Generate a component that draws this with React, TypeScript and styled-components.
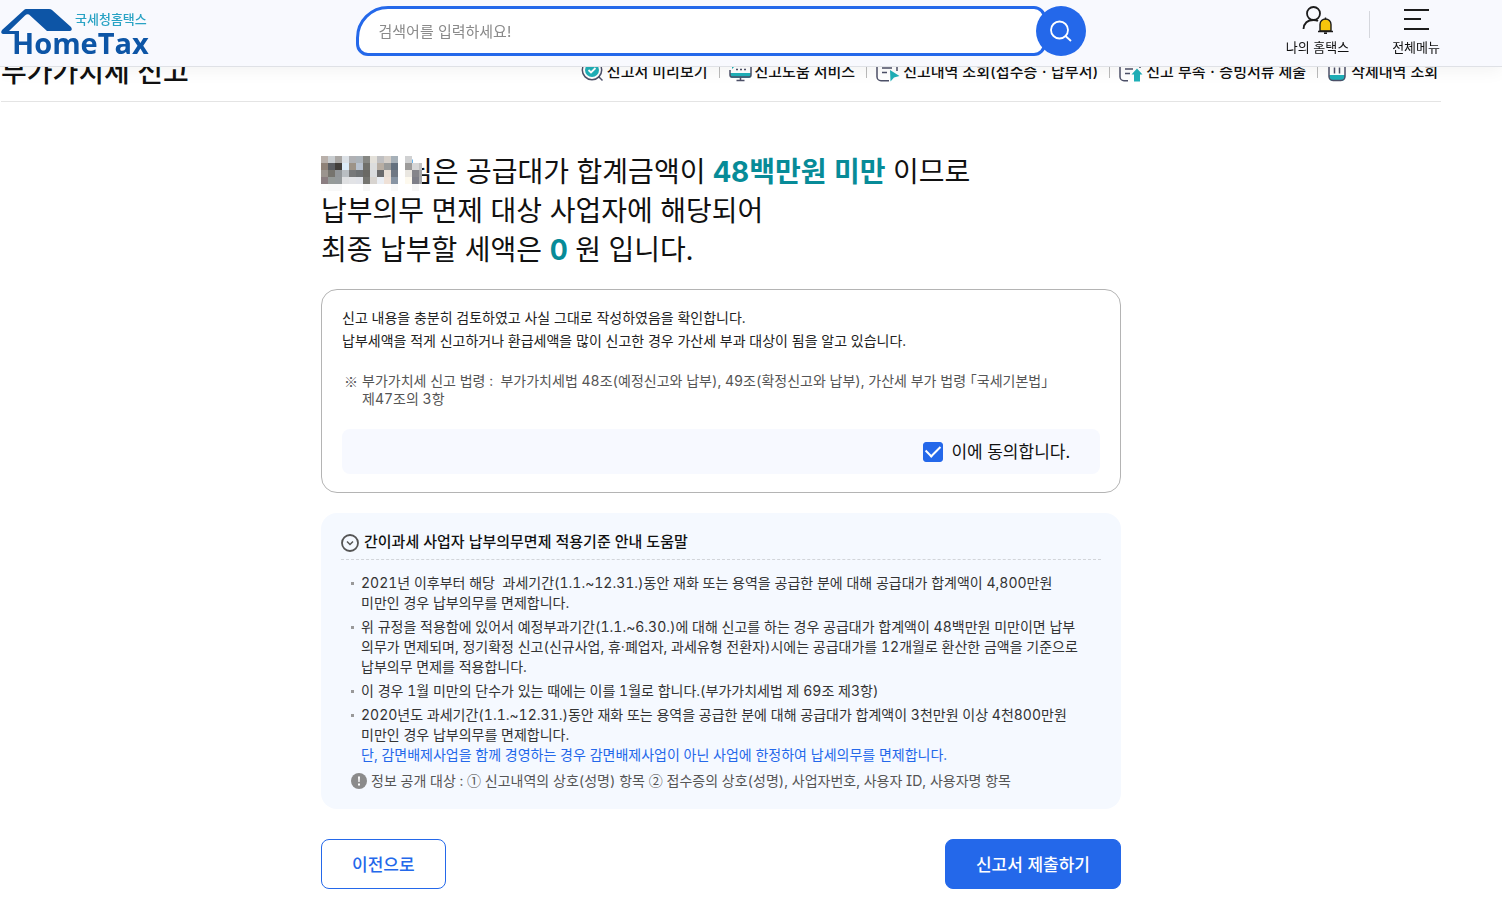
import React from "react";
import styled, { createGlobalStyle } from "styled-components";

const Global = createGlobalStyle`
  * { box-sizing: border-box; }
  body {
    margin: 0; background: #fff; color: #111; font-family: Inter, "Noto Sans CJK KR", sans-serif; font-size: 14px;
    word-break: keep-all; font-variant-numeric: tabular-nums; font-feature-settings: "cv08", "calt" 0;
  }
  h1, h2, p, ul { margin: 0; padding: 0; }
  button, input { font-family: inherit; }
  a { color: inherit; text-decoration: none; }
`;

const Header = styled.header`
  position: fixed; top: 0; left: 0; right: 0; z-index: 10;
  height: 67px; background: #f8f9fe; border-bottom: 1px solid #dfe1e6;
  box-shadow: 0 4px 16px rgba(0, 0, 0, 0.05);
`;
const HeaderInner = styled.div`
  max-width: 1441px; height: 66px; display: grid; align-items: start;
  grid-template-columns: 1fr 730px 1fr;
`;
const Logo = styled.a`
  display: block; width: 152px; height: 56px; margin-top: 6px;
`;
const Search = styled.form`
  display: flex; align-items: center; margin-top: 6px;
`;
const SearchInput = styled.input`
  flex: 1; min-width: 0; height: 50px; border: 3px solid #2468ea; background: #fff;
  border-radius: 32px 12px 12px 12px; padding: 0 20px; font-size: 15px; color: #222; outline: 0;
  margin-right: -10px;
  &::placeholder { color: #8a8a8a; opacity: 1; }
`;
const SearchButton = styled.button`
  position: relative; width: 50px; height: 50px; border: 0; border-radius: 50%; background: #2468ea;
  padding: 0; display: grid; place-items: center;
`;
const Quick = styled.nav`
  display: flex; justify-content: flex-end; padding: 5px 1px 0 0;
`;
const QuickLink = styled.a`
  display: flex; flex-direction: column; align-items: center; gap: 4px;
  font-size: 13px; line-height: 19px; color: #111;
`;
const QuickBar = styled.span`
  width: 1px; height: 27px; margin: 6px 22px 0 20px; background: #d5d7dd;
`;

const Page = styled.div`max-width: 1441px; padding-left: 1px;`;
const TitleBar = styled.div`
  display: flex; justify-content: space-between; align-items: flex-end; height: 102px;
  padding-bottom: 13px; border-bottom: 1px solid #e4e4e4;
`;
const PageTitle = styled.h1`font-size: 28px; line-height: 32px; font-weight: 500;`;
const Tools = styled.nav`display: flex; align-items: center; padding: 0 3px 6px 0;`;
const Tool = styled.a`
  display: flex; align-items: center; gap: 3px; height: 24px; font-size: 15px; font-weight: 500; white-space: nowrap;
  & + & { margin-left: 11px; }
  & + &::before { content: ""; width: 1px; height: 15px; background: #bbb; margin-right: 6px; }
`;

const Main = styled.main`max-width: 800px; margin: 51px auto 0; padding-bottom: 36px;`;
const Lead = styled.h2`font-size: 28px; line-height: 39px; font-weight: 400; color: #111;`;
const Strong = styled.strong`font-weight: 700; color: #078b98;`;
const Masked = styled.span`
  position: relative; display: inline-block; width: 86px; height: 26px;
`;
const Mosaic = styled.svg`position: absolute; left: 0; top: 0;`;

const Consent = styled.section`
  margin-top: 19px; border: 1px solid #b4b4b4; border-radius: 16px; padding: 16px 20px 18px; color: #222;
`;
const Statement = styled.p`line-height: 23px;`;
const Symbol = styled.span`font-family: "Noto Sans CJK KR", sans-serif;`;
const Law = styled.p`
  margin-top: 20px; display: flex; gap: 4px; padding: 0 40px 0 2px; line-height: 18px; color: #555; white-space: pre-wrap;
`;
const Agree = styled.div`
  display: flex; justify-content: flex-end; align-items: center; gap: 8px; height: 45px; margin-top: 21px;
  padding-right: 30px; border-radius: 8px; background: #f7f9ff; font-size: 17px; color: #111;
`;
const AgreeLabel = styled.label`padding-bottom: 2px;`;
const Check = styled.input`
  appearance: none; width: 20px; height: 20px; margin: 0; border-radius: 3px; border: 1px solid #2468ea; background: #fff;
  display: grid; place-items: center;
  &:checked { background: #2468ea; }
  &:checked::before {
    content: ""; width: 12px; height: 7px; border: solid #fff; border-width: 0 0 2px 2px;
    transform: translateY(-2px) rotate(-45deg);
  }
`;

const Help = styled.section`
  margin-top: 20px; padding: 16px 20px 18px; border-radius: 16px; background: #f5f9ff; color: #333;
`;
const HelpTitle = styled.h2`
  display: flex; align-items: center; gap: 5px; height: 31px; padding-bottom: 8px; font-size: 15px; font-weight: 500; color: #111;
  border-bottom: 1px dashed #d2d5da;
  svg { margin-top: 5px; }
`;
const List = styled.ul`
  list-style: none; margin-top: 13px; padding-left: 10px; display: flex; flex-direction: column; gap: 4px;
`;
const Item = styled.li`
  display: flex; gap: 7px; line-height: 20px; white-space: pre-wrap;
  &::before { content: ""; flex: none; width: 3px; height: 3px; margin-top: 9px; background: #999; }
`;
const Accent = styled.span`color: #2468ea;`;
const Notice = styled.p`
  display: flex; align-items: center; gap: 4px; margin-top: 5px; padding-left: 10px; line-height: 20px; color: #555;
`;

const Actions = styled.div`display: flex; justify-content: space-between; margin-top: 30px;`;
const ActionButton = styled.button<{ $primary?: boolean }>`
  height: 50px; padding: 0 30px 2px; border-radius: 8px; font-size: 17px; font-weight: 500;
  border: 1px solid #2468ea;
  background: ${(p) => (p.$primary ? "#2468ea" : "#fff")};
  color: ${(p) => (p.$primary ? "#fff" : "#2468ea")};
`;

const teal = "#1fb0b8";
const ink = "#4d5068";

const PreviewIcon = () => (
  <svg width="23" height="24" viewBox="0 0 23 24" fill="none">
    <circle cx="11" cy="12" r="9.7" stroke={ink} strokeWidth="1.5" />
    <path d="M17.500 18.500l4 4" stroke={ink} strokeWidth="1.5" />
    <circle cx="11" cy="12" r="7" fill={teal} />
    <path d="M7.500 12l2.500 2.500 4.500-4.500" stroke="#fff" strokeWidth="1.8" />
  </svg>
);
const HelpIcon = () => (
  <svg width="23" height="24" viewBox="0 0 23 24" fill="none">
    <path d="M1 15h21v3a2 2 0 0 1-2 2H3a2 2 0 0 1-2-2z" fill={teal} />
    <path d="M12 4h8a2 2 0 0 1 2 2v11a2 2 0 0 1-2 2H3a2 2 0 0 1-2-2v-5M11.500 19v3.500M7.500 22.500h8" stroke={ink} strokeWidth="1.500" />
    <path d="M2 1h8v7H6l-3 3V8H2z" fill={teal} />
    <path d="M7 11.500h2M11 11.500h2M15 11.500h2" stroke={ink} strokeWidth="1.500" />
  </svg>
);
const HistoryIcon = () => (
  <svg width="24" height="24" viewBox="0 0 24 24" fill="none">
    <path d="M13 22.700H5a4 4 0 0 1-4-4V5a3 3 0 0 1 3-3h14a3 3 0 0 1 3 3v8M6 10h10M6 14.500h5" stroke={ink} strokeWidth="1.500" />
    <path d="M14 12l9.500 6-5.500 1.500-3.500 4z" fill={teal} />
  </svg>
);
const UploadIcon = () => (
  <svg width="24" height="24" viewBox="0 0 24 24" fill="none">
    <path d="M9 22.700H5a4 4 0 0 1-4-4V5a3 3 0 0 1 3-3h14a3 3 0 0 1 3 3v5M6 15.500h5M6 11h8" stroke={ink} strokeWidth="1.500" />
    <path d="M6 7.500h5" stroke={teal} strokeWidth="1.500" />
    <path d="M18 10.500l5.500 6H21v7h-6v-7h-2.500z" fill={teal} />
  </svg>
);
const TrashIcon = () => (
  <svg width="21" height="24" viewBox="0 0 21 24" fill="none">
    <path d="M2 17h16v2a4 4 0 0 1-4 4H6a4 4 0 0 1-4-4z" fill={teal} />
    <path d="M2 4v14.500a4 4 0 0 0 4 4h8a4 4 0 0 0 4-4V4M0 4h20M7.500 9.500v6M12.500 9.500v6" stroke={ink} strokeWidth="1.500" />
  </svg>
);

const tools = [
  { icon: <PreviewIcon />, label: "신고서 미리보기" },
  { icon: <HelpIcon />, label: "신고도움 서비스" },
  { icon: <HistoryIcon />, label: "신고내역 조회(접수증ㆍ납부서)" },
  { icon: <UploadIcon />, label: "신고 부속ㆍ증빙서류 제출" },
  { icon: <TrashIcon />, label: "삭제내역 조회" },
];

const mosaicRows = [
  ["#b9b0aa", "#c9cdd0", "#aaa7a4", "#dce1e6", "#b0b1b4", "#acb3b9", "#868783", "#e4e1da", "#bfbfc1", "#d5cfc9", "#a6b0b8", "", "#d0d1d2"],
  ["#8f8278", "#5c5e62", "#423e3a", "#dcebf7", "#9d9387", "#b8c2cf", "#70706b", "#dcdddd", "#b8aea3", "#9a9b9a", "#64717f", "", "#9c9b9a", "#d7d7d7", "#c2c2c2"],
  ["#9b948e", "#76746e", "#93979a", "#b9bec2", "#777879", "#6e7173", "#6a6964", "#dadcdf", "#6a6a6c", "#e8ded5", "#707884", "", "#eae7e1", "#85858a", "#a6a6a8"],
  ["#8a7d80", "#959a98", "#94999b", "#dfe0e2", "#e2e3e6", "#e0e2e8", "#74746f", "#d8d4d0", "#eaeef4", "#efe1d7", "#8794a3", "", "#fdf9ee", "#7d7e87", "#aaaaac"],
  ["#fbfbfb", "#f8f8f8", "#f8f8f8", "", "", "", "#f6f6f6", "", "", "", "#f8f8f8", "", "", "#f6f6f6"],
];

export default function App() {
  return (
    <>
      <Global />
      <Header>
        <HeaderInner>
          <Logo href="#" aria-label="국세청홈택스 HomeTax">
            <svg width="152" height="56" viewBox="0 6 152 56">
              <path d="M26 9h23q2 0 3 1l19 17q2 3-1 4H47L29 14.500q-2-1-4 1L9 31h10v5h-4v-2H3q-3-1-1-4L24 10q1-1 2-1z" fill="#0d55a6" />
              <text x="75" y="24" fontSize="13" fontWeight="500" fill="#28a2c4" fontFamily="Noto Sans CJK KR, sans-serif">국세청홈택스</text>
              <text x="12" y="54" fontSize="29" fontWeight="700" fill="#0d55a6" fontFamily="Open Sans, sans-serif">HomeTax</text>
            </svg>
          </Logo>
          <Search onSubmit={(e) => e.preventDefault()}>
            <SearchInput aria-label="검색어" placeholder="검색어를 입력하세요!" />
            <SearchButton aria-label="검색">
              <svg width="24" height="24" viewBox="0 0 24 24" fill="none" stroke="#fff" strokeWidth="1.800">
                <circle cx="10.500" cy="11" r="8.500" />
                <path d="M16.500 17l5.500 5" />
              </svg>
            </SearchButton>
          </Search>
          <Quick>
            <QuickLink href="#">
              <svg width="32" height="29" viewBox="0 0 32 29" fill="none" stroke="#1c1c1c" strokeWidth="1.800">
                <circle cx="11.500" cy="8.500" r="6.500" />
                <path d="M1.500 24C2 18 6 15 11.500 15c2 0 3.500.3 4.500 1" />
                <path d="M18 26v-6.500a5.500 5.500 0 0 1 11 0V26z" fill="#f6c50c" strokeWidth="1.400" />
                <path d="M16 26.500h15M23.500 12.500v2M22 28.300h3" strokeWidth="1.400" />
              </svg>
              나의 홈택스
            </QuickLink>
            <QuickBar />
            <QuickLink href="#">
              <svg width="26" height="29" viewBox="0 0 26 29" stroke="#1c1c1c" strokeWidth="2">
                <path d="M1 5h25M1 14h17M1 24h25" />
              </svg>
              전체메뉴
            </QuickLink>
          </Quick>
        </HeaderInner>
      </Header>

      <Page>
        <TitleBar>
          <PageTitle>부가가치세 신고</PageTitle>
          <Tools>
            {tools.map((t) => (
              <Tool href="#" key={t.label}>{t.icon}{t.label}</Tool>
            ))}
          </Tools>
        </TitleBar>

        <Main>
          <Lead>
            <Masked>
              <Mosaic width="102" height="35" viewBox="0 0 102 35" shapeRendering="crispEdges" aria-hidden="true">
                {mosaicRows.map((row, y) =>
                  row.map((c, x) => c && <rect key={`${x}-${y}`} x={x * 7} y={y * 7} width={x === 14 ? 3 : 7} height="7" fill={c} />)
                )}
              </Mosaic>
            </Masked>
            님은 공급대가 합계금액이 <Strong>48백만원 미만</Strong> 이므로<br />
            납부의무 면제 대상 사업자에 해당되어<br />
            최종 납부할 세액은 <Strong>0</Strong> 원 입니다.
          </Lead>

          <Consent>
            <Statement>신고 내용을 충분히 검토하였고 사실 그대로 작성하였음을 확인합니다.</Statement>
            <Statement>납부세액을 적게 신고하거나 환급세액을 많이 신고한 경우 가산세 부과 대상이 됨을 알고 있습니다.</Statement>
            <Law>
              <Symbol>※</Symbol>
              <span>부가가치세 신고 법령 :  부가가치세법 48조(예정신고와 납부), 49조(확정신고와 납부), 가산세 부가 법령 ｢국세기본법｣<br />제47조의 3항</span>
            </Law>
            <Agree>
              <Check type="checkbox" id="agree" defaultChecked />
              <AgreeLabel htmlFor="agree">이에 동의합니다.</AgreeLabel>
            </Agree>
          </Consent>

          <Help>
            <HelpTitle>
              <svg width="18" height="18" viewBox="0 0 18 18" fill="none" stroke="#555">
                <circle cx="9" cy="9" r="8" strokeWidth="1.800" />
                <path d="M6 7.500l3 3 3-3" strokeWidth="1.500" />
              </svg>
              간이과세 사업자 납부의무면제 적용기준 안내 도움말
            </HelpTitle>
            <List>
              <Item><span>2021년 이후부터 해당  과세기간(1.1.~12.31.)동안 재화 또는 용역을 공급한 분에 대해 공급대가 합계액이 4,800만원<br />미만인 경우 납부의무를 면제합니다.</span></Item>
              <Item><span>위 규정을 적용함에 있어서 예정부과기간(1.1.~6.30.)에 대해 신고를 하는 경우 공급대가 합계액이 48백만원 미만이면 납부<br />의무가 면제되며, 정기확정 신고(신규사업, 휴·폐업자, 과세유형 전환자)시에는 공급대가를 12개월로 환산한 금액을 기준으로<br />납부의무 면제를 적용합니다.</span></Item>
              <Item><span>이 경우 1월 미만의 단수가 있는 때에는 이를 1월로 합니다.(부가가치세법 제 69조 제3항)</span></Item>
              <Item><span>2020년도 과세기간(1.1.~12.31.)동안 재화 또는 용역을 공급한 분에 대해 공급대가 합계액이 3천만원 이상 4천800만원<br />미만인 경우 납부의무를 면제합니다.<br /><Accent>단, 감면배제사업을 함께 경영하는 경우 감면배제사업이 아닌 사업에 한정하여 납세의무를 면제합니다.</Accent></span></Item>
            </List>
            <Notice>
              <svg width="16" height="16" viewBox="0 0 16 16">
                <circle cx="8" cy="8" r="8" fill="#8b8b8b" />
                <path d="M7 3.500h2l-.4 5.500H7.400zM7 10.500h2v2H7z" fill="#fff" />
              </svg>
              <span>정보 공개 대상 : <Symbol>①</Symbol> 신고내역의 상호(성명) 항목 <Symbol>②</Symbol> 접수증의 상호(성명), 사업자번호, 사용자 ID, 사용자명 항목</span>
            </Notice>
          </Help>

          <Actions>
            <ActionButton type="button">이전으로</ActionButton>
            <ActionButton type="button" $primary>신고서 제출하기</ActionButton>
          </Actions>
        </Main>
      </Page>
    </>
  );
}
